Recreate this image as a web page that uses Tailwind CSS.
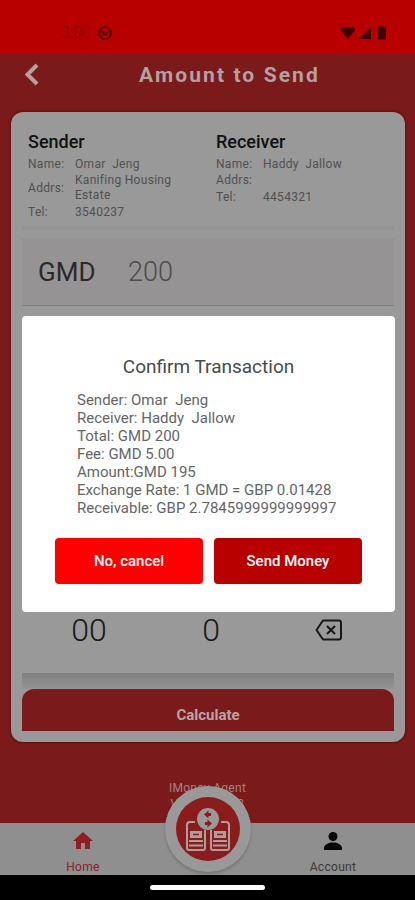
<!DOCTYPE html>
<html lang="en">

<head>
    <meta charset="UTF-8">
    <meta name="viewport" content="width=device-width, initial-scale=1.0">
    <title>Amount to Send</title>
    <script src="https://cdn.jsdelivr.net/npm/@tailwindcss/browser@4"></script>
</head>

<body class="min-h-screen flex flex-col bg-black font-[Roboto,sans-serif]">
    <!-- Status bar -->
    <div class="h-[53px] shrink-0 bg-[#b90000] text-[#3f0000] flex items-center justify-between pl-[61px] pr-[25px] pt-3">
        <div class="flex items-center gap-1.5">
            <span class="text-base font-light text-[#7a0000]">3:00</span>
            <svg class="w-4 h-4" viewBox="0 0 16 16" fill="none" stroke="#5a0000" stroke-width="2">
                <circle cx="8" cy="8" r="6"></circle>
                <path d="M3 7h10M5.500 9.500h5" stroke-width="1.500"></path>
            </svg>
        </div>
        <div class="flex items-center gap-[3px]">
            <svg class="w-4 h-4" viewBox="0 0 16 16" fill="currentColor">
                <path d="M8 14L1 5q0-3 3-3h8q3 0 3 3z"></path>
            </svg>
            <svg class="w-3 h-4" viewBox="0 0 12 16" fill="currentColor">
                <path d="M12 2v12H0z"></path>
            </svg>
            <svg class="w-4 h-4" viewBox="0 0 16 16" fill="currentColor">
                <path d="M6 1h4v1.500h1q1 0 1 1V13q0 1.500-1.500 1.500h-5Q4 14.500 4 13V3.500q0-1 1-1h1z"></path>
            </svg>
        </div>
    </div>

    <div class="relative flex-1 flex flex-col bg-[#7a1a1a]">
        <!-- Header -->
        <header class="h-[59px] flex items-start pt-2 px-4">
            <button class="w-8 h-7 flex items-center justify-center" aria-label="Back">
                <svg class="w-8 h-7" viewBox="0 0 32 28" fill="none" stroke="#b3a0a0" stroke-width="4">
                    <path d="M21 4L11.500 13.500 21 23"></path>
                </svg>
            </button>
            <h1 class="flex-1 pl-3 text-center text-[21px] leading-7 font-bold tracking-widest text-[#b3a0a0]">Amount to Send</h1>
        </header>

        <!-- Transfer card -->
        <main class="flex-1 flex flex-col ml-[11px] mr-2.5 rounded-xl bg-[#999] px-[11px] pb-[11px] shadow-[0_0_3px_#4a0000]">
            <div class="grid grid-cols-2 px-1.5 pt-5 pb-1.5 text-xs tracking-wide text-[#505050] border-b-4 border-[#949494]">
                <section>
                    <h2 class="text-lg leading-5 font-medium tracking-normal text-[#111]">Sender</h2>
                    <table class="mt-1">
                        <tbody>
                            <tr>
                                <td class="w-[47px] leading-4">Name:</td>
                                <td class="leading-4 whitespace-pre">Omar  Jeng</td>
                            </tr>
                            <tr>
                                <td class="leading-4">Addrs:</td>
                                <td class="leading-[15px] py-px">Kanifing Housing<br>Estate</td>
                            </tr>
                            <tr>
                                <td class="leading-4">Tel:</td>
                                <td class="leading-4">3540237</td>
                            </tr>
                        </tbody>
                    </table>
                </section>
                <section class="pl-2">
                    <h2 class="text-lg leading-5 font-medium tracking-normal text-[#111]">Receiver</h2>
                    <table class="mt-1">
                        <tbody>
                            <tr>
                                <td class="w-[47px] leading-4">Name:</td>
                                <td class="leading-4 whitespace-pre">Haddy  Jallow</td>
                            </tr>
                            <tr>
                                <td class="leading-[17px]">Addrs:</td>
                                <td></td>
                            </tr>
                            <tr>
                                <td class="leading-[17px]">Tel:</td>
                                <td class="leading-[17px]">4454321</td>
                            </tr>
                        </tbody>
                    </table>
                </section>
            </div>

            <div class="mt-2 h-[68px] flex items-center bg-[#959393] border-b border-[#7c7c7c] pt-0.5 pl-4">
                <label for="amount" class="w-[90px] text-[26px] text-[#2a2a2a]">GMD</label>
                <input id="amount" type="text" value="200" class="flex-1 min-w-0 bg-transparent text-[27px] font-light text-[#4c4c4c] outline-none">
            </div>

            <!-- Keypad, last row -->
            <div class="flex-1 flex flex-col justify-end pb-[19px]">
                <div class="grid grid-cols-3 h-12 pl-1.5 text-[32px] font-light text-[#181818]">
                    <button>00</button>
                    <button>0</button>
                    <button class="flex items-center justify-center pr-2" aria-label="Delete">
                        <svg class="w-7 h-6" viewBox="0 0 28 24" fill="none" stroke="currentColor" stroke-width="2" stroke-linejoin="round">
                            <path d="M8 2.500h16q2 0 2 2v15q0 2-2 2H8L1.500 12z"></path>
                            <path d="M12 8l8 8M20 8l-8 8"></path>
                        </svg>
                    </button>
                </div>
            </div>
            <div class="h-4 bg-linear-to-b from-[#808080] to-[#949494]"></div>
            <button class="h-[42px] pt-2.5 rounded-t-xl bg-[#7a1a1a] text-[15px] font-bold text-[#b8a5a5]">Calculate</button>
        </main>

        <div class="h-[81px] pt-[38px] text-center text-xs leading-4 tracking-wide text-[#a58282]">
            <p>IMoney Agent</p>
            <p>Version 1.0.8</p>
        </div>

        <!-- Bottom navigation -->
        <nav class="relative h-[52px] flex justify-between bg-[#8f8f8f] text-xs tracking-wide">
            <a href="#" class="w-40 pl-1.5 pt-1.5 flex flex-col items-center gap-1.5 text-[#8f1d25]">
                <svg class="w-6 h-6" viewBox="0 0 24 24" fill="currentColor">
                    <path d="M10 20v-6h4v6h5v-8h3L12 3 2 12h3v8z"></path>
                </svg>
                Home
            </a>
            <a href="#" class="w-40 pr-1 pt-1.5 flex flex-col items-center gap-1.5 text-[#3a3a3a]">
                <svg class="w-6 h-6" viewBox="0 0 24 24" fill="#080808">
                    <circle cx="12" cy="7.500" r="4.500"></circle>
                    <path d="M3 21v-2c0-3.500 5-5.500 9-5.500s9 2 9 5.500v2z"></path>
                </svg>
                Account
            </a>
            <button class="absolute left-1/2 -top-[37px] -translate-x-1/2 w-[86px] h-[86px] rounded-full bg-[#999] flex items-center justify-center shadow-[0_2px_3px_#0003]" aria-label="Send money">
                <svg class="w-16 h-16" viewBox="0 0 64 64" fill="none">
                    <circle cx="32" cy="32" r="32" fill="#8a1c1c"></circle>
                    <g stroke="#aaa0a0" stroke-width="2">
                        <path d="M19 25h-5q-3 0-3 3v23q0 2 2 2h14q2 0 2-2V33M45 25h5q3 0 3 3v23q0 2-2 2H37q-2 0-2-2V33"></path>
                        <path d="M13 44h14M13 48.500h14M37 44h14M37 48.500h14"></path>
                    </g>
                    <rect x="14" y="34" width="12" height="7" fill="#aaa0a0"></rect>
                    <rect x="38" y="34" width="12" height="7" fill="#aaa0a0"></rect>
                    <path d="M17 37.500h6M41 37.500h6" stroke="#8a1c1c" stroke-width="1.500"></path>
                    <circle cx="32" cy="22" r="11" fill="#999"></circle>
                    <path d="M28 17.500l4.500-4v2.500H35v3h-2.500v2.500zM36 26.500l-4.500-4V25H29v3h2.500v2.500z" fill="#8a1c1c"></path>
                </svg>
            </button>
        </nav>

        <!-- Confirm dialog -->
        <div class="absolute inset-0 flex items-center justify-center pl-[22px] pr-5">
            <div role="dialog" aria-labelledby="confirm-title" class="w-full rounded bg-white px-[33px] pt-[39px] pb-7">
                <h2 id="confirm-title" class="text-center text-[19px] leading-6 text-[#4a4a4a]">Confirm Transaction</h2>
                <div class="mt-3 pl-[22px] text-[15px] leading-[18px] text-[#666]">
                    <p class="whitespace-pre">Sender: Omar  Jeng</p>
                    <p class="whitespace-pre">Receiver: Haddy  Jallow</p>
                    <p>Total: GMD 200</p>
                    <p>Fee: GMD 5.00</p>
                    <p>Amount:GMD 195</p>
                    <p>Exchange Rate: 1 GMD = GBP 0.01428</p>
                    <p>Receivable: GBP 2.7845999999999997</p>
                </div>
                <div class="mt-[21px] grid grid-cols-2 gap-[11px] text-[15px] font-medium text-white">
                    <button class="h-[46px] rounded bg-[#ff0000]">No, cancel</button>
                    <button class="h-[46px] rounded bg-[#b90000]">Send Money</button>
                </div>
            </div>
        </div>
    </div>

    <!-- Gesture bar -->
    <div class="h-[25px] shrink-0 flex items-center justify-center">
        <div class="w-[115px] h-[5px] rounded-full bg-white"></div>
    </div>
</body>

</html>
